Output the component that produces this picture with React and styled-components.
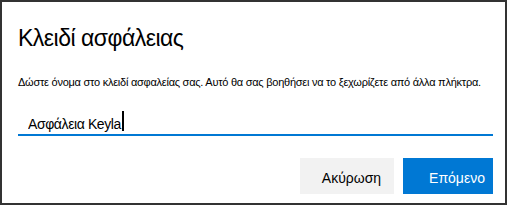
import React from "react";
import styled, { createGlobalStyle } from "styled-components";

const GlobalStyle = createGlobalStyle`
    html, body {
        margin: 0;
        padding: 0;
        background: #fff;
    }
    * {
        box-sizing: border-box;
    }
`;

const App = () => {
    return (
        <>
            <GlobalStyle />
            <Dialogo>
                <Titulo>Κλειδί ασφάλειας</Titulo>
                <Descripcion>
                    Δώστε όνομα στο κλειδί ασφαλείας σας. Αυτό θα σας βοηθήσει να το ξεχωρίζετε από άλλα πλήκτρα.
                </Descripcion>
                <CampoTexto>
                    <Entrada defaultValue="Ασφάλεια Keyla" readOnly />
                    <Cursor />
                </CampoTexto>
                <Acciones>
                    <Boton ancho="94px" desplazamiento="9px">Ακύρωση</Boton>
                    <Boton primario ancho="90px" desplazamiento="18px">Επόμενο</Boton>
                </Acciones>
            </Dialogo>
        </>
    )
}

export default App;

const Dialogo = styled.div`
    width: 507px;
    height: 205px;
    border: 2px solid #333333;
    padding: 20px 12px 0 16px;
    font-family: "Liberation Sans", Arial, sans-serif;
    color: #000;
    display: flex;
    flex-direction: column;
`;

const Titulo = styled.h1`
    margin: 0;
    font-size: 23px;
    font-weight: 400;
    line-height: 32px;
    letter-spacing: -0.5px;
`;

const Descripcion = styled.p`
    margin: 20px 0 0 0;
    font-size: 11px;
    line-height: 16px;
    letter-spacing: -0.25px;
    white-space: nowrap;
`;

const CampoTexto = styled.div`
    position: relative;
    margin-top: 16px;
    border-bottom: 2px solid #0078d4;
    height: 30px;
`;

const Entrada = styled.input`
    width: 100%;
    height: 100%;
    border: none;
    outline: none;
    background: transparent;
    padding: 8px 10px 0 10px;
    font-family: "Liberation Sans", Arial, sans-serif;
    font-size: 14px;
    letter-spacing: -0.4px;
    color: #000;
`;

const Cursor = styled.span`
    position: absolute;
    left: 104px;
    top: 5px;
    width: 2px;
    height: 20px;
    background: #000;
`;

const Acciones = styled.div`
    display: flex;
    justify-content: flex-end;
    gap: 9px;
    margin-top: 22px;
`;

const Boton = styled.button`
    height: 36px;
    width: ${({ancho}) => ancho};
    padding: 3px 0 0 ${({desplazamiento}) => desplazamiento};
    border: none;
    font-family: "Liberation Sans", Arial, sans-serif;
    font-size: 14px;
    background: ${({primario}) => primario ? '#0078d4' : '#f2f2f2'};
    color: ${({primario}) => primario ? '#fff' : '#000'};
    cursor: pointer;
`;
